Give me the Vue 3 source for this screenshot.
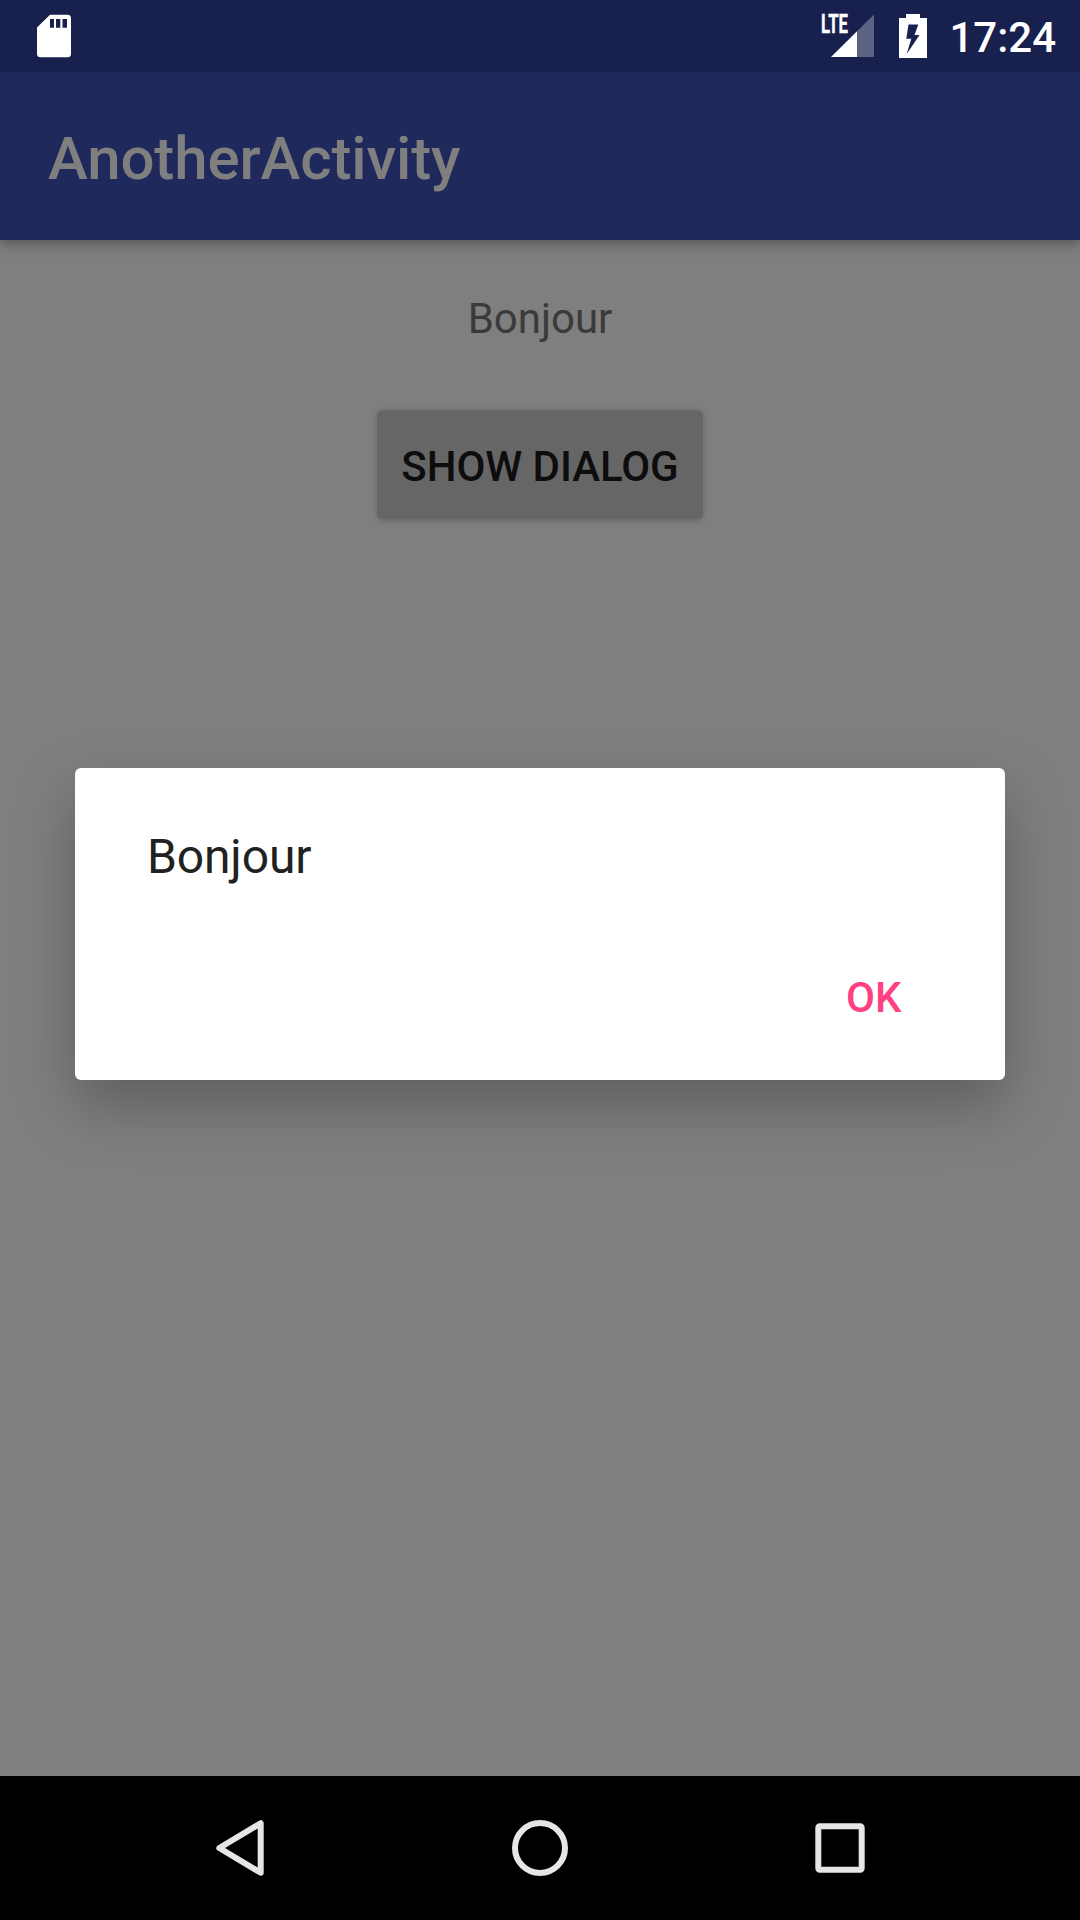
<script setup>
const title = 'AnotherActivity'
const greeting = 'Bonjour'
const time = '17:24'
</script>

<template>
  <div class="screen">
    <div class="status">
      <svg class="sd" width="34" height="44" viewBox="0 0 34 44">
        <path fill="#fff" fill-rule="evenodd" d="M13 .7H30.5Q34 .7 34 4.2V39.8Q34 43.3 30.5 43.3H3.5Q0 43.3 0 39.8V13.5ZM13 5V13.7H17V5ZM19 5V13.7H23.3V5ZM25.5 5V13.7H30V5Z" />
      </svg>
      <svg class="signal" width="54" height="44" viewBox="0 0 54 44">
        <path fill="#fff" fill-opacity=".3" d="M53 .5V43H36V17.3Z" />
        <path fill="#fff" d="M36 17.3V43H10Z" />
        <text class="lte" x="0" y="19.4" textLength="27" lengthAdjust="spacingAndGlyphs">LTE</text>
      </svg>
      <svg class="battery" width="28" height="44" viewBox="0 0 28 44">
        <path fill="#fff" fill-rule="evenodd" d="M7 0H21V4H28V44H0V4H7ZM9.5 10.5L7.3 24.8H12.3L7.7 40L20.5 21H15.5L19.3 10.5Z" />
      </svg>
      <span class="clock">{{ time }}</span>
    </div>
    <header class="appbar">
      <h1>{{ title }}</h1>
    </header>
    <main class="content">
      <p class="greeting">{{ greeting }}</p>
      <button class="show" type="button">SHOW DIALOG</button>
    </main>
    <nav class="nav">
      <svg width="60" height="60" viewBox="0 0 60 60"><path d="M50.7 5.2V54.8L9.3 30Z" /></svg>
      <svg width="60" height="60" viewBox="0 0 60 60"><circle cx="30" cy="30" r="25" /></svg>
      <svg width="60" height="60" viewBox="0 0 60 60"><rect x="8.3" y="8.3" width="43.4" height="43.4" rx="1.5" /></svg>
    </nav>
    <div class="dialog" role="dialog">
      <p class="message">{{ greeting }}</p>
      <div class="actions"><button class="ok" type="button">OK</button></div>
    </div>
  </div>
</template>

<style>
body { margin: 0; background: #7f7f7f; }
</style>

<style scoped>
.screen {
  position: relative;
  display: flex;
  flex-direction: column;
  width: 1080px;
  height: 1920px;
  overflow: hidden;
  background: #7f7f7f;
  font-family: Roboto, "Liberation Sans", sans-serif;
}
h1, p { margin: 0; font-weight: 400; }
button { border: 0; margin: 0; font-family: inherit; }
.status {
  position: relative;
  z-index: 1;
  box-sizing: border-box;
  height: 72px;
  display: flex;
  align-items: center;
  padding: 0 24px 0 37px;
  background: #18204e;
}
.signal { margin-left: auto; overflow: visible; }
.battery { margin-left: 24px; }
.lte { font-size: 26px; font-weight: 700; fill: #fff; stroke: #fff; stroke-width: .4; }
.clock {
  margin-left: 22px;
  padding-top: 4px;
  font-size: 42px;
  font-weight: 500;
  line-height: 50px;
  color: #fff;
}
.appbar {
  box-sizing: border-box;
  height: 168px;
  display: flex;
  align-items: center;
  padding: 5px 48px 0;
  background: #20295b;
  box-shadow: 0 4px 12px rgba(0, 0, 0, .32);
}
.appbar h1 { font-size: 60px; font-weight: 500; line-height: 70px; letter-spacing: -.12px; color: #7f7f7f; }
.content {
  flex: 1;
  display: flex;
  flex-direction: column;
  align-items: center;
  padding-top: 54px;
}
.greeting { font-size: 42px; line-height: 50px; color: #3a3a3a; }
.show {
  width: 326px;
  height: 109px;
  margin-top: 66px;
  padding: 3px 0 0;
  border-radius: 6px;
  background: #666;
  color: #0d0d0d;
  font-size: 42px;
  font-weight: 500;
  letter-spacing: -.06px;
  white-space: nowrap;
  box-shadow: 0 1px 6px rgba(0, 0, 0, .22);
}
.nav {
  height: 144px;
  display: flex;
  align-items: center;
  justify-content: center;
  gap: 240px;
  background: #000;
}
.nav svg { fill: none; stroke: #e6e6e6; stroke-width: 6; stroke-linejoin: round; }
.dialog {
  position: absolute;
  left: 75px;
  top: 768px;
  box-sizing: border-box;
  width: 930px;
  height: 312px;
  padding: 61px 72px 0;
  border-radius: 6px;
  background: #fff;
  box-shadow: 0 26px 60px rgba(0, 0, 0, .26);
}
.message { font-size: 48px; line-height: 56px; letter-spacing: -.15px; color: #212121; }
.actions { display: flex; justify-content: flex-end; margin-top: 88px; }
.ok {
  padding: 0 31.5px;
  background: none;
  color: #ff4081;
  font-size: 42px;
  font-weight: 500;
  line-height: 50px;
}
</style>
